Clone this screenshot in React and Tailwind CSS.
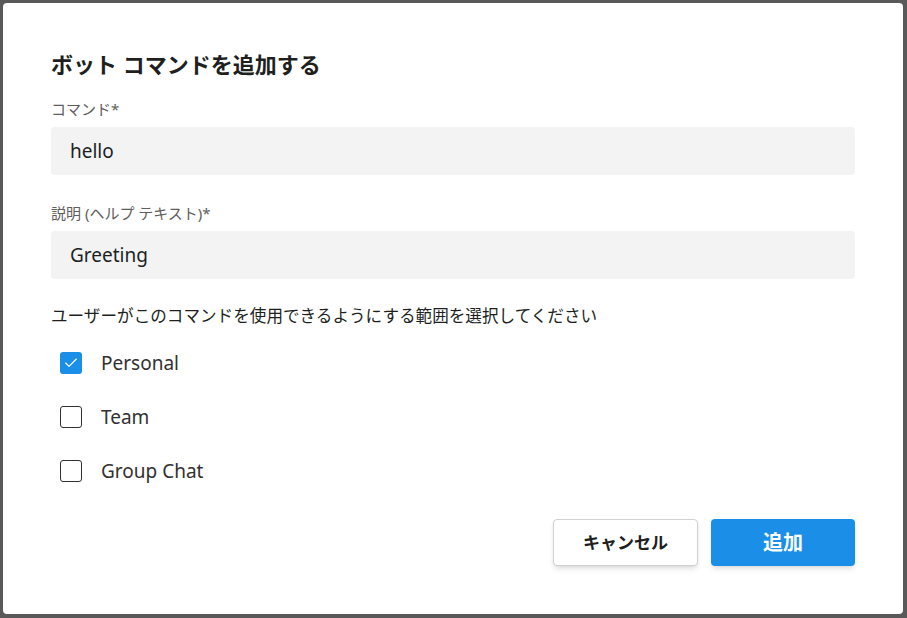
import { Check } from 'lucide-react';

const font = { fontFamily: '"Noto Sans", "Noto Sans CJK JP", sans-serif' };

function Field({ label, value }) {
    return (
        <div className="flex flex-col">
            <label className="text-[15px] leading-[20px] text-[#605e5c]">{label}</label>
            <div className="mt-2 h-12 rounded bg-[#f3f3f3] px-[19px] flex items-center text-[19px] text-[#201f1e]">
                {value}
            </div>
        </div>
    );
}

function Box({ checked, label }) {
    return (
        <div className="flex items-center h-6 pl-[9px]">
            {checked ? (
                <span className="w-[22px] h-[22px] rounded-[3px] bg-[#1b8fe8] flex items-center justify-center">
                    <Check size={16} strokeWidth={1.75} className="text-white" />
                </span>
            ) : (
                <span className="w-[22px] h-[22px] rounded-[3px] border border-[#323130] bg-white" />
            )}
            <span className="ml-[19px] text-[19px] text-[#323130]">{label}</span>
        </div>
    );
}

export default function App() {
    return (
        <div className="w-[907px] h-[618px] bg-[#595959] pt-[3px] pl-[3px] pr-[4px] pb-[4px] flex" style={font}>
            {/* Dialog */}
            <div className="flex-1 bg-white rounded px-12 pt-[45px] flex flex-col">
                <h2 className="text-[22px] leading-[32px] font-bold text-[#201f1e]">ボット コマンドを追加する</h2>

                <div className="mt-[19px]">
                    <Field label="コマンド*" value="hello" />
                </div>
                <div className="mt-7">
                    <Field label="説明 (ヘルプ テキスト)*" value="Greeting" />
                </div>

                <p className="mt-[25px] text-[16.6px] leading-[24px] text-[#201f1e]">
                    ユーザーがこのコマンドを使用できるようにする範囲を選択してください
                </p>

                <div className="mt-[23px] flex flex-col gap-[30px]">
                    <Box checked label="Personal" />
                    <Box label="Team" />
                    <Box label="Group Chat" />
                </div>

                <div className="mt-9 flex justify-end gap-[13px]">
                    <button className="w-[145px] h-[47px] rounded bg-white border border-[#d1d1d1] shadow-md text-[17px] font-bold text-[#201f1e]">
                        キャンセル
                    </button>
                    <button className="w-[144px] h-[47px] rounded bg-[#1b8fe8] shadow-md text-[20px] font-bold text-white">
                        追加
                    </button>
                </div>
            </div>
        </div>
    );
}
